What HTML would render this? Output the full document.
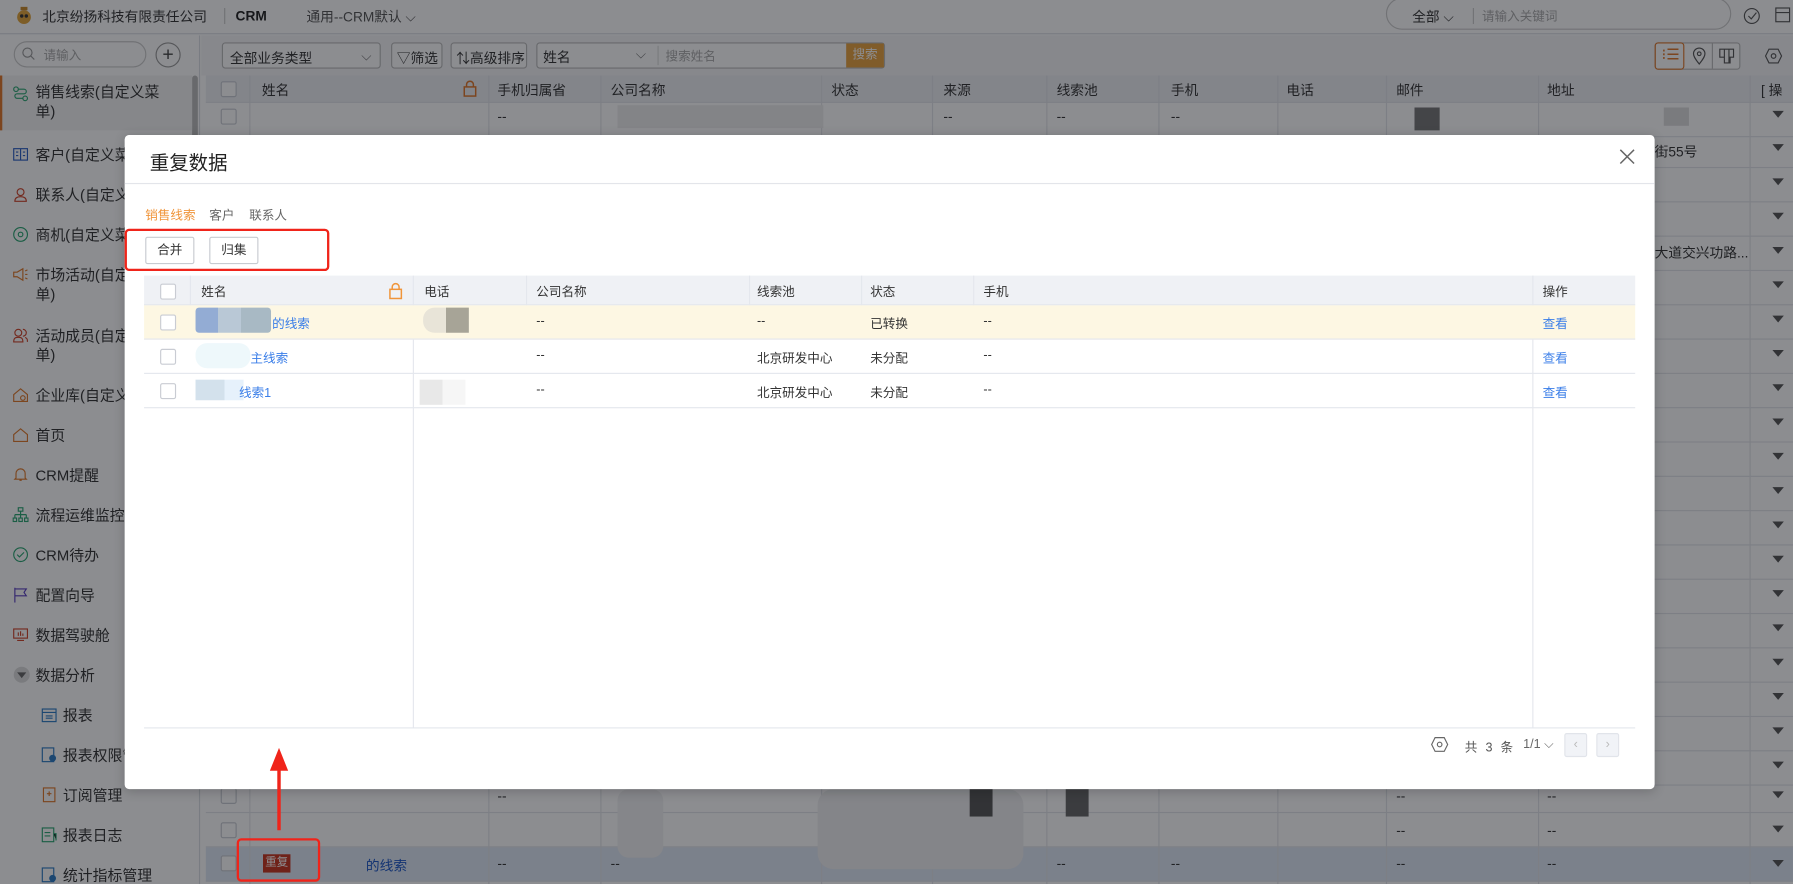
<!DOCTYPE html>
<html><head><meta charset="utf-8">
<style>
*{box-sizing:border-box;margin:0;padding:0}
html,body{width:1793px;height:884px;overflow:hidden;background:#fff}
body{font-family:"Liberation Sans","Noto Sans CJK SC",sans-serif;color:#333}
#root{position:absolute;left:0;top:0;width:1568px;height:773px;transform:scale(1.14349,1.1436);transform-origin:0 0;overflow:hidden;background:#fff}
.a{position:absolute;white-space:nowrap}
.t12{font-size:12px}
.cb{position:absolute;width:14px;height:14px;border:1px solid #c9ccd3;border-radius:2px;background:#fff}
.menu{position:absolute;left:31px;font-size:13px;color:#333;line-height:17px}
.mi{position:absolute;left:11px;width:14px;height:14px}
.hd{position:absolute;top:66px;height:24px;background:#eef0f4;border-bottom:1px solid #e3e5ea;left:180px;right:0}
.row{position:absolute;left:180px;right:0;height:30px;border-bottom:1px solid #e3e5ea}
.vl{position:absolute;top:66px;bottom:0;width:1px;background:#e3e5ea}
.tri{position:absolute;right:8px;width:0;height:0;border-left:5px solid transparent;border-right:5px solid transparent;border-top:6px solid #555}
#ov{position:absolute;left:0;top:0;width:1568px;height:773px;background:rgba(10,12,20,0.47)}
#modal{position:absolute;left:109px;top:118px;width:1338px;height:572px;background:#fff;border-radius:4px;box-shadow:0 2px 10px rgba(0,0,0,0.2)}
.mh{position:absolute;top:123px;height:26px;background:#eff1f5;border-bottom:1px solid #e4e7ed}
.mr{position:absolute;height:30px;border-bottom:1px solid #e4e7ed;left:17px;width:1304px}
.link{color:#3a7ee8}
.btn{position:absolute;top:89px;width:43px;height:24px;border:1px solid #c8cbd1;border-radius:2px;font-size:11px;text-align:center;line-height:22px;color:#333}
.c{font-size:11px;top:0}
</style></head><body><div id="root">

<div class="a" style="left:0;top:0;width:1568px;height:30px;border-bottom:1px solid #dcdfe4;background:#fff"></div>
<svg class="a" style="left:13px;top:5px" width="16" height="18"><circle cx="8" cy="10" r="6" fill="#e3a43a"/><circle cx="6" cy="9" r="1.5" fill="#333"/><circle cx="10" cy="9" r="1.5" fill="#333"/><rect x="5" y="1" width="6" height="3" fill="#c98a2a"/></svg>
<div class="a" style="left:37px;top:6px;font-size:12px;color:#333">北京纷扬科技有限责任公司</div>
<div class="a" style="left:196px;top:7px;width:1px;height:14px;background:#ccc"></div>
<div class="a" style="left:206px;top:7px;font-size:12px;font-weight:bold;color:#222">CRM</div>
<div class="a" style="left:268px;top:6px;font-size:12px;color:#555">通用--CRM默认 ⌵</div>
<div class="a" style="left:1212px;top:-2px;width:302px;height:28px;border:1px solid #ccc;border-radius:14px"></div>
<div class="a" style="left:1235px;top:6px;font-size:12px;color:#333">全部 ⌵</div>
<div class="a" style="left:1288px;top:7px;width:1px;height:14px;background:#ccc"></div>
<div class="a" style="left:1296px;top:6px;font-size:11px;color:#aaa">请输入关键词</div>
<svg class="a" style="left:1524px;top:6px" width="16" height="16"><circle cx="8" cy="8" r="6.5" fill="none" stroke="#555" stroke-width="1"/><path d="M5 8l2.5 2.5L12 5" fill="none" stroke="#555"/></svg>
<svg class="a" style="left:1551px;top:5px" width="16" height="16"><rect x="2" y="2" width="12" height="12" fill="none" stroke="#555"/><path d="M2 6h12" stroke="#555"/></svg>

<div class="a" style="left:0;top:31px;width:175px;height:742px;background:#fff;border-right:1px solid #dcdfe4"></div>
<div class="a" style="left:168px;top:66px;width:5px;height:65px;background:#bbb;border-radius:3px"></div>
<div class="a" style="left:12px;top:36px;width:116px;height:23px;border:1px solid #ccc;border-radius:12px"></div>
<svg class="a" style="left:19px;top:41px" width="12" height="12"><circle cx="5" cy="5" r="4" fill="none" stroke="#999"/><path d="M8 8l3 3" stroke="#999"/></svg>
<div class="a" style="left:38px;top:40px;font-size:11px;color:#aaa">请输入</div>
<div class="a" style="left:136px;top:37px;width:22px;height:22px;border:1px solid #999;border-radius:50%;text-align:center;line-height:19px;font-size:17px;color:#444">+</div>
<div class="a" style="left:0;top:66px;width:168px;height:48px;background:#f4f4f4"></div>
<div class="a" style="left:0;top:66px;width:2px;height:48px;background:#e0782a"></div>
<svg class="mi" style="top:75px" viewBox="0 0 14 14"><circle cx="3" cy="3" r="2" fill="none" stroke="#2aa772"/><circle cx="11" cy="11" r="2" fill="none" stroke="#2aa772"/><path d="M5 3h5a2 2 0 010 4H4a2 2 0 000 4h5" fill="none" stroke="#2aa772"/></svg>
<div class="menu" style="top:72px">销售线索(自定义菜<br>单)</div>
<svg class="mi" style="top:128px" viewBox="0 0 14 14"><rect x="1" y="2" width="12" height="10" fill="none" stroke="#2c5fc4"/><path d="M7 2v10M3 5h2M3 8h2M9 5h2M9 8h2" stroke="#2c5fc4"/></svg>
<div class="menu" style="top:127px">客户(自定义菜</div>
<svg class="mi" style="top:163px" viewBox="0 0 14 14"><circle cx="7" cy="5" r="3" fill="none" stroke="#d0452b"/><path d="M2 13c0-3 2-4 5-4s5 1 5 4z" fill="none" stroke="#d0452b"/></svg>
<div class="menu" style="top:162px">联系人(自定义</div>
<svg class="mi" style="top:198px" viewBox="0 0 14 14"><circle cx="7" cy="7" r="6" fill="none" stroke="#2aa772"/><circle cx="7" cy="7" r="2" fill="none" stroke="#2aa772"/></svg>
<div class="menu" style="top:197px">商机(自定义菜</div>
<svg class="mi" style="top:233px" viewBox="0 0 14 14"><path d="M1 5h3l5-3v10L4 9H1z" fill="none" stroke="#e07a2a"/><path d="M11 4l2-1M11 7h2M11 10l2 1" stroke="#e07a2a"/></svg>
<div class="menu" style="top:232px">市场活动(自定<br>单)</div>
<svg class="mi" style="top:286px" viewBox="0 0 14 14"><circle cx="5" cy="5" r="3" fill="none" stroke="#d0452b"/><path d="M1 13c0-3 1-4 4-4s4 1 4 4zM9 2a3 3 0 010 6M11 9c2 1 2 2 2 4" fill="none" stroke="#d0452b"/></svg>
<div class="menu" style="top:285px">活动成员(自定<br>单)</div>
<svg class="mi" style="top:338px" viewBox="0 0 14 14"><path d="M1 7l6-5 6 5v6H1z" fill="none" stroke="#e07a2a"/><circle cx="9" cy="10" r="2" fill="none" stroke="#e07a2a"/></svg>
<div class="menu" style="top:337px">企业库(自定义</div>
<svg class="mi" style="top:373px" viewBox="0 0 14 14"><path d="M1 7l6-5 6 5v6H1z" fill="none" stroke="#e07a2a"/></svg>
<div class="menu" style="top:372px">首页</div>
<svg class="mi" style="top:408px" viewBox="0 0 14 14"><path d="M3 10V6a4 4 0 018 0v4l1 1H2zM6 12h2" fill="none" stroke="#e07a2a"/></svg>
<div class="menu" style="top:407px">CRM提醒</div>
<svg class="mi" style="top:443px" viewBox="0 0 14 14"><rect x="5" y="1" width="4" height="3" fill="none" stroke="#2aa772"/><path d="M7 4v3M2 7h10M2 7v3M7 7v3M12 7v3" stroke="#2aa772"/><rect x="0.5" y="10" width="3" height="3" fill="none" stroke="#2aa772"/><rect x="5.5" y="10" width="3" height="3" fill="none" stroke="#2aa772"/><rect x="10.5" y="10" width="3" height="3" fill="none" stroke="#2aa772"/></svg>
<div class="menu" style="top:442px">流程运维监控</div>
<svg class="mi" style="top:478px" viewBox="0 0 14 14"><circle cx="7" cy="7" r="6" fill="none" stroke="#2aa772"/><path d="M4 7l2 2 4-4" fill="none" stroke="#2aa772"/></svg>
<div class="menu" style="top:477px">CRM待办</div>
<svg class="mi" style="top:513px" viewBox="0 0 14 14"><path d="M2 1v13M2 2h10l-2 3 2 3H2" fill="none" stroke="#5a3fc0"/></svg>
<div class="menu" style="top:512px">配置向导</div>
<svg class="mi" style="top:548px" viewBox="0 0 14 14"><rect x="1" y="2" width="12" height="8" fill="none" stroke="#d0452b"/><path d="M4 12h6M5 5v3M7 4v4M9 6v2" stroke="#d0452b"/></svg>
<div class="menu" style="top:547px">数据驾驶舱</div>
<div class="a" style="left:12px;top:583px;width:14px;height:14px;border-radius:50%;background:#ddd"></div>
<div class="a" style="left:15px;top:588px;width:0;height:0;border-left:4px solid transparent;border-right:4px solid transparent;border-top:5px solid #666"></div>
<div class="menu" style="top:582px">数据分析</div>
<svg class="mi" style="left:36px;top:618px" viewBox="0 0 14 14"><rect x="1" y="2" width="12" height="11" fill="none" stroke="#2c7bc4"/><path d="M1 5h12M4 8h6M4 10h6" stroke="#2c7bc4"/></svg>
<div class="menu" style="left:55px;top:617px">报表</div>
<svg class="mi" style="left:36px;top:653px" viewBox="0 0 14 14"><rect x="1" y="1" width="10" height="12" fill="none" stroke="#2c7bc4"/><circle cx="10" cy="10" r="3" fill="#2c7bc4"/></svg>
<div class="menu" style="left:55px;top:652px">报表权限管</div>
<svg class="mi" style="left:36px;top:688px" viewBox="0 0 14 14"><rect x="2" y="1" width="10" height="12" fill="none" stroke="#e07a2a"/><path d="M5 6h4M7 4v4" stroke="#e07a2a"/></svg>
<div class="menu" style="left:55px;top:687px">订阅管理</div>
<svg class="mi" style="left:36px;top:723px" viewBox="0 0 14 14"><rect x="1" y="1" width="10" height="12" fill="none" stroke="#2aa772"/><path d="M3 5h5M3 8h5M11 6h2v6" stroke="#2aa772"/></svg>
<div class="menu" style="left:55px;top:722px">报表日志</div>
<svg class="mi" style="left:36px;top:758px" viewBox="0 0 14 14"><rect x="1" y="1" width="10" height="12" fill="none" stroke="#2c7bc4"/><circle cx="10" cy="10" r="3" fill="#2c7bc4"/></svg>
<div class="menu" style="left:55px;top:757px">统计指标管理</div>

<div class="a" style="left:176px;top:31px;width:1392px;height:35px;background:#f5f6f8"></div>
<div class="a t12" style="left:194px;top:37px;width:139px;height:23px;border:1px solid #bbb;border-radius:3px;background:#fff;padding:4px 6px">全部业务类型<span style="position:absolute;right:7px;color:#777">⌵</span></div>
<div class="a t12" style="left:342px;top:37px;width:45px;height:23px;border:1px solid #bbb;border-radius:3px;background:#fff;padding:4px 4px">▽筛选</div>
<div class="a t12" style="left:394px;top:37px;width:67px;height:23px;border:1px solid #bbb;border-radius:3px;background:#fff;padding:4px 4px">⇅高级排序</div>
<div class="a t12" style="left:469px;top:37px;width:305px;height:23px;border:1px solid #bbb;border-radius:3px;background:#fff"></div>
<div class="a t12" style="left:475px;top:41px">姓名</div>
<div class="a" style="left:556px;top:40px;color:#777;font-size:12px">⌵</div>
<div class="a" style="left:575px;top:40px;width:1px;height:17px;background:#ddd"></div>
<div class="a" style="left:582px;top:41px;font-size:11px;color:#aaa">搜索姓名</div>
<div class="a" style="left:740px;top:38px;width:33px;height:21px;background:#e8a23f;color:#fff;font-size:11px;text-align:center;line-height:21px">搜索</div>
<div class="a" style="left:1447px;top:37px;width:75px;height:24px;border:1px solid #bbb;border-radius:3px;background:#fff"></div>
<div class="a" style="left:1447px;top:37px;width:26px;height:24px;border:1px solid #e0782a;border-radius:3px"></div>
<div class="a" style="left:1453px;top:40px;color:#e0782a;font-size:13px">⁝☰</div>
<svg class="a" style="left:1479px;top:41px" width="14" height="16"><path d="M7 15C3 10 2 8 2 6a5 5 0 0110 0c0 2-1 4-5 9z" fill="none" stroke="#555"/><circle cx="7" cy="6" r="1.6" fill="none" stroke="#555"/></svg>
<div class="a" style="left:1497px;top:38px;width:1px;height:22px;background:#bbb"></div>
<svg class="a" style="left:1503px;top:42px" width="14" height="14"><path d="M1 1h12v7h-3v5H5V8H1z M5 1v7M9 1v12" fill="none" stroke="#555"/></svg>
<svg class="a" style="left:1543px;top:41px" width="16" height="16"><path d="M4 2h8l3 6-3 6H4L1 8z" fill="none" stroke="#555"/><circle cx="8" cy="8" r="2" fill="none" stroke="#555"/></svg>

<div class="hd"></div>
<div class="row" style="top:90px"></div><div class="row" style="top:116px;height:31px"></div>
<div class="row" style="top:147px"></div><div class="row" style="top:177px"></div><div class="row" style="top:207px"></div>
<div class="row" style="top:237px"></div><div class="row" style="top:267px"></div><div class="row" style="top:297px"></div>
<div class="row" style="top:327px"></div><div class="row" style="top:357px"></div><div class="row" style="top:387px"></div>
<div class="row" style="top:417px"></div><div class="row" style="top:447px"></div><div class="row" style="top:477px"></div>
<div class="row" style="top:507px"></div><div class="row" style="top:537px"></div><div class="row" style="top:567px"></div>
<div class="row" style="top:597px"></div><div class="row" style="top:627px"></div><div class="row" style="top:657px"></div>
<div class="row" style="top:681px"></div><div class="row" style="top:711px"></div>
<div class="row" style="top:741px;background:#dfe9f5"></div>
<div class="vl" style="left:218px"></div><div class="vl" style="left:427px"></div><div class="vl" style="left:525px"></div><div class="vl" style="left:718px"></div><div class="vl" style="left:815px"></div><div class="vl" style="left:915px"></div><div class="vl" style="left:1013px"></div><div class="vl" style="left:1117px"></div><div class="vl" style="left:1212px"></div><div class="vl" style="left:1345px"></div><div class="vl" style="left:1530px"></div>
<div class="cb" style="left:193px;top:71px"></div><div class="cb" style="left:193px;top:95px"></div>
<div class="cb" style="left:193px;top:689px"></div><div class="cb" style="left:193px;top:719px"></div><div class="cb" style="left:193px;top:748px"></div>
<div class="a t12" style="left:229px;top:70px">姓名</div>
<svg class="a" style="left:405px;top:70px" width="12" height="15"><rect x="1" y="6" width="10" height="8" fill="none" stroke="#e0782a" stroke-width="1.3"/><path d="M3 6V4a3 3 0 016 0v2" fill="none" stroke="#e0782a" stroke-width="1.3"/></svg>
<div class="a t12" style="left:435px;top:70px">手机归属省</div><div class="a t12" style="left:534px;top:70px">公司名称</div><div class="a t12" style="left:727px;top:70px">状态</div><div class="a t12" style="left:825px;top:70px">来源</div><div class="a t12" style="left:924px;top:70px">线索池</div><div class="a t12" style="left:1024px;top:70px">手机</div><div class="a t12" style="left:1125px;top:70px">电话</div><div class="a t12" style="left:1221px;top:70px">邮件</div><div class="a t12" style="left:1353px;top:70px">地址</div><div class="a t12" style="left:1540px;top:70px">[ 操</div>
<div class="a t12" style="left:435px;top:95px">--</div><div class="a t12" style="left:825px;top:95px">--</div><div class="a t12" style="left:924px;top:95px">--</div><div class="a t12" style="left:1024px;top:95px">--</div>
<div class="a" style="left:540px;top:92px;width:180px;height:20px;background:#eee"></div>
<div class="a" style="left:1237px;top:94px;width:22px;height:20px;background:#777"></div>
<div class="a" style="left:1455px;top:94px;width:22px;height:16px;background:#ddd"></div>
<div class="a t12" style="left:1447px;top:124px">街55号</div>
<div class="a t12" style="left:1447px;top:212px">大道交兴功路...</div>
<div class="a t12" style="left:435px;top:689px">--</div><div class="a t12" style="left:1221px;top:689px">--</div><div class="a t12" style="left:1353px;top:689px">--</div>
<div class="a t12" style="left:1221px;top:719px">--</div><div class="a t12" style="left:1353px;top:719px">--</div>
<div class="a t12" style="left:435px;top:748px">--</div><div class="a t12" style="left:534px;top:748px">--</div><div class="a t12" style="left:924px;top:748px">--</div><div class="a t12" style="left:1024px;top:748px">--</div><div class="a t12" style="left:1221px;top:748px">--</div><div class="a t12" style="left:1353px;top:748px">--</div>
<div class="a" style="left:540px;top:690px;width:40px;height:60px;background:#f2f2f3;border-radius:10px"></div>
<div class="a" style="left:715px;top:690px;width:180px;height:70px;background:#f0f0f2;border-radius:14px"></div>
<div class="a" style="left:848px;top:688px;width:20px;height:26px;background:#555"></div>
<div class="a" style="left:932px;top:688px;width:20px;height:26px;background:#666"></div>
<div class="a" style="left:230px;top:747px;width:24px;height:16px;background:#c9351f;color:#fff;font-size:10px;text-align:center;line-height:16px">重复</div>
<div class="a t12" style="left:320px;top:748px;color:#1b56c7">的线索</div>
<div class="tri" style="top:97px"></div><div class="tri" style="top:126px"></div><div class="tri" style="top:156px"></div><div class="tri" style="top:186px"></div><div class="tri" style="top:216px"></div><div class="tri" style="top:246px"></div><div class="tri" style="top:276px"></div><div class="tri" style="top:306px"></div><div class="tri" style="top:336px"></div><div class="tri" style="top:366px"></div><div class="tri" style="top:396px"></div><div class="tri" style="top:426px"></div><div class="tri" style="top:456px"></div><div class="tri" style="top:486px"></div><div class="tri" style="top:516px"></div><div class="tri" style="top:546px"></div><div class="tri" style="top:576px"></div><div class="tri" style="top:606px"></div><div class="tri" style="top:636px"></div><div class="tri" style="top:666px"></div><div class="tri" style="top:692px"></div><div class="tri" style="top:722px"></div><div class="tri" style="top:752px"></div>

<div id="ov"></div>

<div id="modal">
  <div class="a" style="left:22px;top:10px;font-size:17px;color:#222">重复数据</div>
  <svg class="a" style="left:1307px;top:12px" width="14" height="14"><path d="M1 1l12 12M13 1L1 13" stroke="#666" stroke-width="1.3"/></svg>
  <div class="a" style="left:0;top:42px;width:1338px;height:1px;background:#e3e5ea"></div>
  <div class="a" style="left:18px;top:62px;font-size:11px;color:#f0953a">销售线索</div>
  <div class="a" style="left:74px;top:62px;font-size:11px;color:#666">客户</div>
  <div class="a" style="left:109px;top:62px;font-size:11px;color:#666">联系人</div>
  <div class="btn" style="left:18px">合并</div>
  <div class="btn" style="left:74px">归集</div>

  <div class="mh" style="left:17px;width:1304px"></div>
  <div class="a" style="left:252px;top:123px;width:1px;height:396px;background:#e4e7ed"></div>
  <div class="a" style="left:1231px;top:123px;width:1px;height:396px;background:#e4e7ed"></div>
  <div class="a" style="left:57px;top:123px;width:1px;height:26px;background:#e4e7ed"></div>
  <div class="a" style="left:351px;top:123px;width:1px;height:26px;background:#e4e7ed"></div>
  <div class="a" style="left:546px;top:123px;width:1px;height:26px;background:#e4e7ed"></div>
  <div class="a" style="left:644px;top:123px;width:1px;height:26px;background:#e4e7ed"></div>
  <div class="a" style="left:742px;top:123px;width:1px;height:26px;background:#e4e7ed"></div>
  <div class="mr" style="top:149px;background:#fdf7e3"></div>
  <div class="mr" style="top:179px"></div>
  <div class="mr" style="top:209px"></div>
  <div class="a" style="left:17px;top:518px;width:1304px;height:1px;background:#e4e7ed"></div>
  <div class="cb" style="left:31px;top:130px"></div>
  <div class="cb" style="left:31px;top:157px"></div>
  <div class="cb" style="left:31px;top:187px"></div>
  <div class="cb" style="left:31px;top:217px"></div>
  <div class="a" style="left:67px;top:129px;font-size:11px">姓名</div>
  <svg class="a" style="left:231px;top:129px" width="12" height="15"><rect x="1" y="6" width="10" height="8" fill="none" stroke="#f0953a" stroke-width="1.3"/><path d="M3 6V4a3 3 0 016 0v2" fill="none" stroke="#f0953a" stroke-width="1.3"/></svg>
  <div class="a" style="left:262px;top:129px;font-size:11px">电话</div>
  <div class="a" style="left:360px;top:129px;font-size:11px">公司名称</div>
  <div class="a" style="left:553px;top:129px;font-size:11px">线索池</div>
  <div class="a" style="left:652px;top:129px;font-size:11px">状态</div>
  <div class="a" style="left:751px;top:129px;font-size:11px">手机</div>
  <div class="a" style="left:1240px;top:129px;font-size:11px">操作</div>
  <div class="a" style="left:62px;top:151px;width:66px;height:22px;background:linear-gradient(90deg,#93acd4 0,#93acd4 30%,#b9c8d6 30%,#b9c8d6 60%,#a8b9c4 60%);border-radius:3px"></div>
  <div class="a link" style="left:129px;top:157px;font-size:11px">的线索</div>
  <div class="a" style="left:261px;top:151px;width:40px;height:22px;background:linear-gradient(90deg,#e8e4d8 50%,#a7a497 50%);border-radius:10px 0 0 10px"></div>
  <div class="a" style="left:360px;top:157px;font-size:11px">--</div>
  <div class="a" style="left:553px;top:157px;font-size:11px">--</div>
  <div class="a" style="left:652px;top:157px;font-size:11px">已转换</div>
  <div class="a" style="left:751px;top:157px;font-size:11px">--</div>
  <div class="a link" style="left:1240px;top:157px;font-size:11px">查看</div>
  <div class="a" style="left:62px;top:182px;width:48px;height:22px;background:#eef8fb;border-radius:10px"></div>
  <div class="a link" style="left:110px;top:187px;font-size:11px">主线索</div>
  <div class="a" style="left:360px;top:187px;font-size:11px">--</div>
  <div class="a" style="left:553px;top:187px;font-size:11px">北京研发中心</div>
  <div class="a" style="left:652px;top:187px;font-size:11px">未分配</div>
  <div class="a" style="left:751px;top:187px;font-size:11px">--</div>
  <div class="a link" style="left:1240px;top:187px;font-size:11px">查看</div>
  <div class="a" style="left:62px;top:214px;width:42px;height:18px;background:linear-gradient(90deg,#d3e1ec 60%,#e6f1fb 60%)"></div>
  <div class="a link" style="left:100px;top:217px;font-size:11px">线索1</div>
  <div class="a" style="left:258px;top:214px;width:40px;height:22px;background:linear-gradient(90deg,#e8e8e8 50%,#f6f6f6 50%)"></div>
  <div class="a" style="left:360px;top:217px;font-size:11px">--</div>
  <div class="a" style="left:553px;top:217px;font-size:11px">北京研发中心</div>
  <div class="a" style="left:652px;top:217px;font-size:11px">未分配</div>
  <div class="a" style="left:751px;top:217px;font-size:11px">--</div>
  <div class="a link" style="left:1240px;top:217px;font-size:11px">查看</div>
  <svg class="a" style="left:1142px;top:525px" width="16" height="16"><path d="M4 2h8l3 6-3 6H4L1 8z" fill="none" stroke="#666"/><circle cx="8" cy="8" r="2" fill="none" stroke="#666"/></svg>
  <div class="a" style="left:1172px;top:527px;font-size:11px;color:#555;letter-spacing:2px">共 3 条</div>
  <div class="a" style="left:1223px;top:527px;font-size:11px;color:#666">1/1 ⌵</div>
  <div class="a" style="left:1259px;top:523px;width:20px;height:21px;border:1px solid #e1e4ea;background:#f1f3f7;border-radius:2px;color:#bbb;font-size:11px;text-align:center;line-height:19px">‹</div>
  <div class="a" style="left:1287px;top:523px;width:20px;height:21px;border:1px solid #e1e4ea;background:#f1f3f7;border-radius:2px;color:#bbb;font-size:11px;text-align:center;line-height:19px">›</div>
</div>

<div class="a" style="left:109px;top:200px;width:179px;height:37px;border:2px solid #f0241a;border-radius:4px"></div>
<div class="a" style="left:207px;top:733px;width:73px;height:38px;border:2px solid #f0241a;border-radius:4px"></div>
<svg class="a" style="left:233px;top:652px" width="22" height="76"><path d="M11 74V18" stroke="#f0241a" stroke-width="3"/><path d="M11 2L3 22h16z" fill="#f0241a"/></svg>

</div></body></html>
